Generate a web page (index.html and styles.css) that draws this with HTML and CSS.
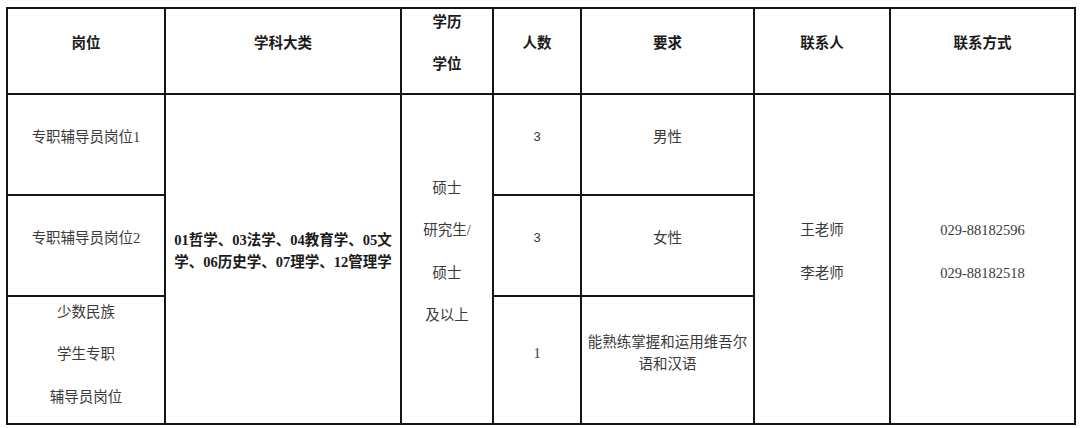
FILE: index.html
```html
<!DOCTYPE html>
<html lang="zh">
<head>
<meta charset="utf-8">
<link rel="stylesheet" href="styles.css">
</head>
<body>
<table class="tbl">
  <colgroup>
    <col class="c1"><col class="c2"><col class="c3"><col class="c4"><col class="c5"><col class="c6"><col class="c7">
  </colgroup>
  <tr class="head">
    <th>岗位</th>
    <th>学科大类</th>
    <th class="stack"><span class="ln">学历</span><span class="ln">学位</span></th>
    <th>人数</th>
    <th>要求</th>
    <th>联系人</th>
    <th>联系方式</th>
  </tr>
  <tr class="r1">
    <td>专职辅导员岗位1</td>
    <td rowspan="3" class="subj">01哲学、03法学、04教育学、05文学、06历史学、07理学、12管理学</td>
    <td rowspan="3" class="stack"><span class="ln">硕士</span><span class="ln">研究生/</span><span class="ln">硕士</span><span class="ln">及以上</span></td>
    <td class="num">3</td>
    <td>男性</td>
    <td rowspan="3" class="stack"><span class="ln">王老师</span><span class="ln">李老师</span></td>
    <td rowspan="3" class="stack"><span class="ln">029-88182596</span><span class="ln">029-88182518</span></td>
  </tr>
  <tr class="r2">
    <td>专职辅导员岗位2</td>
    <td class="num">3</td>
    <td>女性</td>
  </tr>
  <tr class="r3">
    <td class="stack low"><span class="ln">少数民族</span><span class="ln">学生专职</span><span class="ln">辅导员岗位</span></td>
    <td>1</td>
    <td class="wrap">能熟练掌握和运用维吾尔语和汉语</td>
  </tr>
</table>
</body>
</html>
```

FILE: styles.css
```css
html, body {
  margin: 0;
  padding: 0;
  background: #ffffff;
}
body {
  padding: 7px 0 0 6px;
  font-family: "Liberation Serif", "Noto Sans CJK SC", serif;
  font-size: 14.5px;
  color: #3a3a3a;
}
.tbl {
  border-collapse: collapse;
  table-layout: fixed;
  width: 1068px;
}
.c1 { width: 158px; }
.c2 { width: 236px; }
.c3 { width: 92px; }
.c4 { width: 88px; }
.c5 { width: 173px; }
.c6 { width: 136px; }
.c7 { width: 185px; }
.tbl th, .tbl td {
  border: 2px solid #151515;
  text-align: center;
  vertical-align: middle;
  padding: 0 4px 15px;
  line-height: 22px;
}
.tbl th {
  font-weight: bold;
  color: #1a1a1a;
  padding-bottom: 16px;
}
.head { height: 86px; }
.r1 { height: 101px; }
.r2 { height: 101px; }
.r3 { height: 128px; }
.ln {
  display: block;
  line-height: 22px;
}
.ln + .ln {
  margin-top: 20.5px;
}
.tbl .low {
  padding-bottom: 12px;
}
.tbl .subj {
  font-weight: bold;
  color: #1a1a1a;
  line-height: 22.5px;
  padding: 0 3px 16px;
}
.num {
  font-family: "Liberation Sans", "Noto Sans CJK SC", sans-serif;
  font-size: 13px;
}
.tbl .wrap {
  line-height: 22.5px;
  padding: 0 5px 14px;
}
```
